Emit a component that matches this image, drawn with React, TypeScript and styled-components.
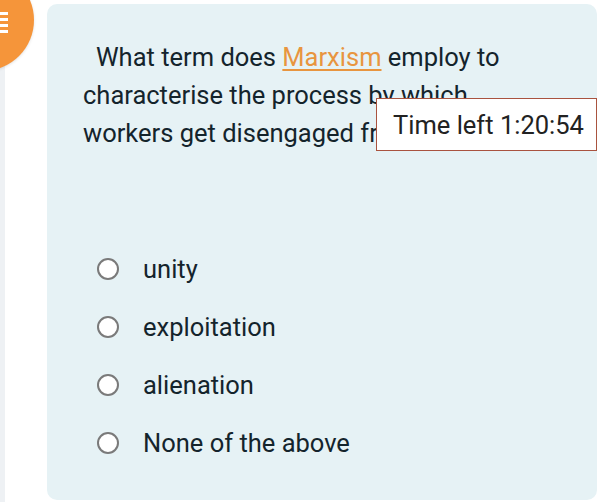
import React from "react"
import styled, { createGlobalStyle } from "styled-components"

const GlobalStyle = createGlobalStyle`
  html, body {
    margin: 0;
    padding: 0;
    background: #ffffff;
    font-family: Roboto, "Liberation Sans", sans-serif;
    overflow: hidden;
  }
`

const Page = styled.div`
  display: flex;
  width: 599px;
  height: 502px;
`

const Sidebar = styled.aside`
  position: relative;
  width: 42px;
  flex: none;
  border-left: 5px solid #eef1f4;
`

const MenuBadge = styled.div`
  position: absolute;
  left: -73px;
  top: -31px;
  width: 102px;
  height: 102px;
  border-radius: 50%;
  background: #f5953a;
  box-shadow: 0 1px 3px rgba(0, 0, 0, 0.12);
`

const MenuBars = styled.div`
  position: absolute;
  left: 68px;
  top: 43px;
  display: flex;
  flex-direction: column;
  gap: 3px;

  span {
    display: block;
    width: 8px;
    height: 3px;
    background: #ffffff;
  }
`

const Card = styled.main`
  position: relative;
  flex: 1;
  margin: 4px 2px 2px 0;
  padding: 34px 42px 0 36px;
  background: #e6f2f5;
  border-radius: 10px;
  color: #14242c;
`

const Question = styled.p`
  margin: 0;
  font-size: 25.5px;
  line-height: 38px;
  text-indent: 13px;
`

const Term = styled.a`
  color: #e8953f;
  text-decoration: underline;
  text-underline-offset: 3px;
  text-decoration-thickness: 1.5px;
`

const Timer = styled.div`
  position: absolute;
  right: 0;
  top: 94px;
  width: 219px;
  height: 51px;
  box-sizing: content-box;
  display: flex;
  align-items: center;
  background: #ffffff;
  border: 1px solid #a9533f;
  font-size: 25.5px;
  color: #222222;

  span {
    padding-left: 16px;
  }
`

const Options = styled.ul`
  list-style: none;
  margin: 106px 0 0;
  padding: 0 0 0 14px;
  display: flex;
  flex-direction: column;
  gap: 36px;
`

const Option = styled.li`
  display: flex;
  align-items: center;
  gap: 24px;
  height: 22px;
  font-size: 25.5px;
`

const Radio = styled.span`
  width: 18px;
  height: 18px;
  flex: none;
  border: 2px solid #7a7a7a;
  border-radius: 50%;
  background: #ffffff;
`

const answers = ["unity", "exploitation", "alienation", "None of the above"]

export default function App(): JSX.Element {
  return (
    <Page>
      <GlobalStyle />
      <Sidebar>
        <MenuBadge>
          <MenuBars>
            <span />
            <span />
            <span />
            <span />
          </MenuBars>
        </MenuBadge>
      </Sidebar>
      <Card>
        <Question>
          What term does <Term>Marxism</Term> employ to characterise the
          process by which workers get disengaged from their work?
        </Question>
        <Timer>
          <span>Time left 1:20:54</span>
        </Timer>
        <Options>
          {answers.map((a) => (
            <Option key={a}>
              <Radio />
              {a}
            </Option>
          ))}
        </Options>
      </Card>
    </Page>
  )
}
